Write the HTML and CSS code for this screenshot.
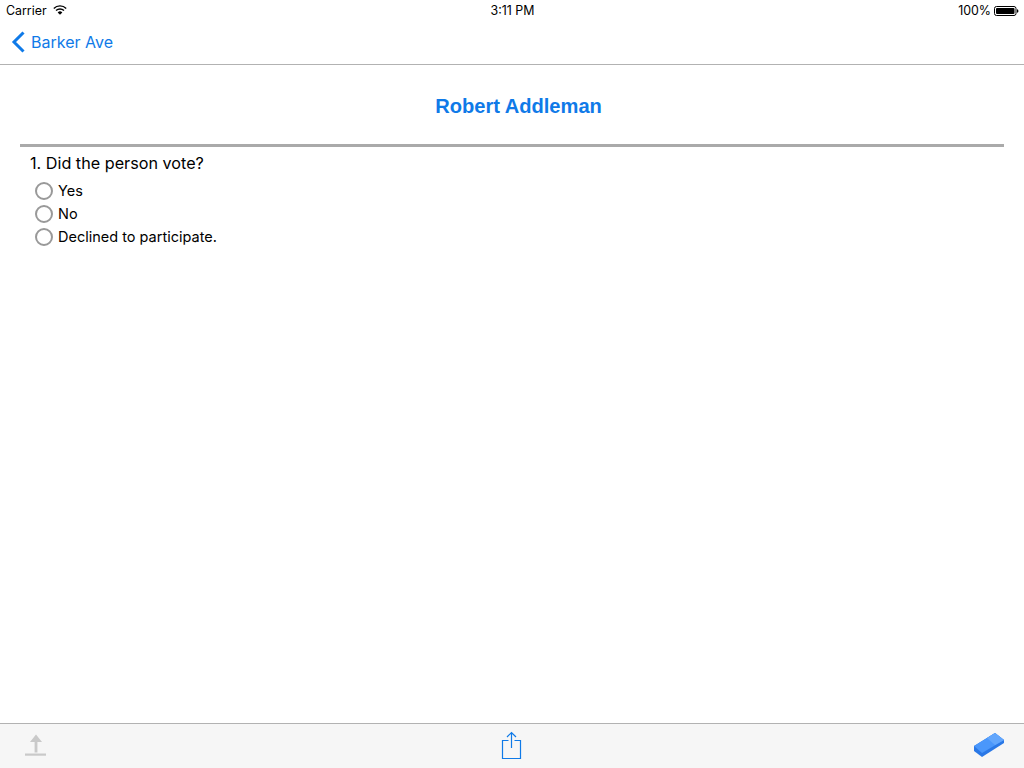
FILE: index.html
```html
<!DOCTYPE html>
<html lang="en">
<head>
<meta charset="utf-8">
<title>Robert Addleman</title>
<link rel="stylesheet" href="styles.css">
</head>
<body>
<div class="page">
  <div class="status">
    <div class="status-left">
      <span>Carrier</span>
      <svg class="wifi" width="14" height="10" viewBox="0 0 14 10"><path d="M.8 3.400a8.800 8.800 0 0 1 12.400 0" fill="none" stroke="#000" stroke-width="1.400"/><path d="M3 5.600a5.800 5.800 0 0 1 8 0" fill="none" stroke="#000" stroke-width="1.400"/><path d="M7 9.800 4.700 7.500a3.200 3.200 0 0 1 4.600 0z" fill="#000"/></svg>
    </div>
    <div class="status-time">3:11 PM</div>
    <div class="status-right">
      <span>100%</span>
      <svg width="25" height="10" viewBox="0 0 25 10"><rect x="0.5" y="0.5" width="21.500" height="9" rx="2" fill="none" stroke="#000"/><rect x="2" y="2" width="18.500" height="6" rx="1" fill="#000"/><path d="M23 3.200c1 .2 1.400.8 1.400 1.800s-.4 1.600-1.400 1.800z" fill="#000"/></svg>
    </div>
  </div>
  <nav class="navbar">
    <a class="back">
      <svg width="14" height="22" viewBox="0 0 14 22"><path d="M12.500 1.500 3 11l9.500 9.500" fill="none" stroke="#0f7ae8" stroke-width="3"/></svg>
      <span>Barker Ave</span>
    </a>
  </nav>
  <main class="content">
    <h1 class="title">Robert Addleman</h1>
    <hr class="rule">
    <div class="question">1. Did the person vote?</div>
    <ul class="options">
      <li class="option"><span class="radio"></span>Yes</li>
      <li class="option"><span class="radio"></span>No</li>
      <li class="option"><span class="radio"></span>Declined to participate.</li>
    </ul>
  </main>
  <footer class="toolbar">
    <svg width="24" height="24" viewBox="0 0 24 24"><path d="M12 .5 6 8h4.600v10.500h2.800V8H18z" fill="#c9c9c9"/><rect x="1" y="19.500" width="21" height="2.200" fill="#c9c9c9"/></svg>
    <svg class="share" width="24" height="30" viewBox="0 0 24 30"><path d="M8.500 9.500h-6v18h18v-18h-6" fill="none" stroke="#0f7ae8" stroke-width="1.200"/><path d="M11.500 1.500V17M7 6l4.500-4.500L16 6" fill="none" stroke="#0f7ae8" stroke-width="1.200"/></svg>
    <svg width="32" height="26" viewBox="0 0 32 26"><path d="M0 13 21 0l9 7v3L8 24l-8-6z" fill="#2a78e6"/><path d="M0 13 21 0l9 7-22 13z" fill="#4a97fb"/><path d="M13 5 21 0l9 7-9 5z" fill="#62a6fc"/></svg>
  </footer>
</div>
</body>
</html>
```
FILE: styles.css
```css
* { box-sizing: border-box; }
html, body { margin: 0; padding: 0; }
body { background: #fff; font-family: "Inter", "Liberation Sans", sans-serif; color: #000; }
.page { width: 1024px; height: 768px; display: flex; flex-direction: column; overflow: hidden; }
.status { height: 21px; display: grid; grid-template-columns: 1fr auto 1fr; align-items: center; padding: 0 5px 0 6px; font-size: 12.400px; }
.status-left { display: flex; align-items: center; gap: 6px; }
.wifi { margin-top: -2px; }
.status-right { display: flex; align-items: center; justify-content: flex-end; gap: 3px; }
.navbar { height: 44px; border-bottom: 1px solid #b2b2b2; display: flex; align-items: center; padding: 0 0 2px 11px; }
.back { display: flex; align-items: center; gap: 6px; color: #0f7ae8; font-size: 16px; }
.content { flex: 1; padding: 0 20px; }
.title { margin: 0; height: 79px; padding: 29px 0 0 13px; text-align: center; font-family: "Liberation Sans", sans-serif; font-size: 20.100px; line-height: 24px; font-weight: bold; color: #0f7ae8; }
.rule { margin: 0; height: 3px; border: 0; background: #aaa; }
.question { padding: 5px 0 0 10px; font-size: 16.200px; line-height: 22px; }
.options { list-style: none; margin: 5px 0 0; padding: 0 0 0 15px; font-size: 14.500px; }
.option { display: flex; align-items: center; gap: 5px; height: 23px; }
.radio { width: 18px; height: 18px; border: 2px solid #999; border-radius: 50%; }
.toolbar { height: 45px; border-top: 1px solid #b2b2b2; background: #f6f6f6; display: flex; align-items: center; justify-content: space-between; padding: 0 18px 0 24px; }
.share { margin-left: 2px; }
```
